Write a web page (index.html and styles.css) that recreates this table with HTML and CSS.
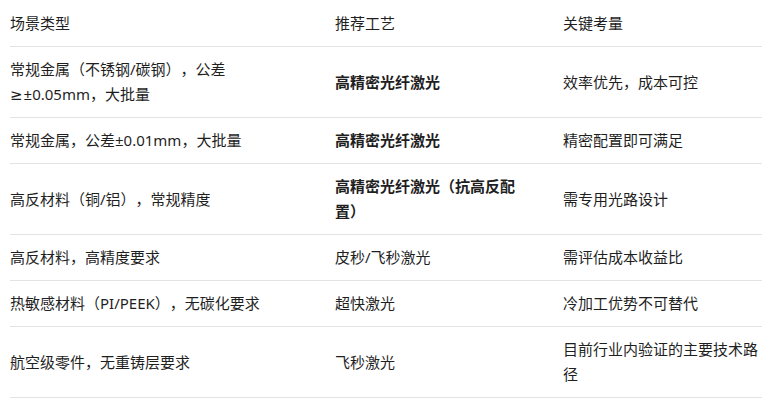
FILE: index.html
```html
<!DOCTYPE html>
<html lang="zh-CN">
<head>
<meta charset="utf-8">
<title>场景类型</title>
<link rel="stylesheet" href="styles.css">
</head>
<body>
<table class="tbl">
  <colgroup>
    <col class="c1">
    <col class="c2">
    <col class="c3">
  </colgroup>
  <thead>
    <tr>
      <th>场景类型</th>
      <th>推荐工艺</th>
      <th>关键考量</th>
    </tr>
  </thead>
  <tbody>
    <tr>
      <td>常规金属（不锈钢/碳钢），公差<span class="sym">≥</span>±0.05mm，大批量</td>
      <td><strong>高精密光纤激光</strong></td>
      <td>效率优先，成本可控</td>
    </tr>
    <tr>
      <td>常规金属，公差±0.01mm，大批量</td>
      <td><strong>高精密光纤激光</strong></td>
      <td>精密配置即可满足</td>
    </tr>
    <tr>
      <td>高反材料（铜/铝），常规精度</td>
      <td><strong>高精密光纤激光（抗高反配置）</strong></td>
      <td>需专用光路设计</td>
    </tr>
    <tr>
      <td>高反材料，高精度要求</td>
      <td>皮秒/飞秒激光</td>
      <td>需评估成本收益比</td>
    </tr>
    <tr>
      <td>热敏感材料（PI/PEEK），无碳化要求</td>
      <td>超快激光</td>
      <td>冷加工优势不可替代</td>
    </tr>
    <tr>
      <td>航空级零件，无重铸层要求</td>
      <td>飞秒激光</td>
      <td>目前行业内验证的主要技术路径</td>
    </tr>
  </tbody>
</table>
</body>
</html>
```
FILE: styles.css
```css
html, body {
  margin: 0;
  padding: 0;
  background: #ffffff;
}
body {
  font-family: "Noto Sans", "Noto Sans CJK SC", sans-serif;
  font-size: 15px;
  line-height: 25px;
  color: #1f1f1f;
  text-spacing-trim: space-all;
  font-feature-settings: "chws" 0, "halt" 0;
}
.tbl {
  margin: 0 0 0 10px;
  width: 752px;
  border-collapse: collapse;
  table-layout: fixed;
}
.c1 { width: 325px; }
.c2 { width: 228px; }
.c3 { width: 199px; }
.tbl th,
.tbl td {
  text-align: left;
  vertical-align: middle;
  padding: 10px 40px 10px 0;
  border-bottom: 1px solid #e3e3e3;
}
.tbl th {
  font-weight: normal;
  padding-top: 11px;
}
.tbl td:first-child,
.tbl th:first-child {
  padding-right: 60px;
}
.tbl td:last-child,
.tbl th:last-child {
  padding-right: 0;
}
.tbl strong {
  font-weight: bold;
}
.sym {
  font-family: "DejaVu Sans", sans-serif;
  line-height: 15px;
  margin-right: 1px;
}
```
